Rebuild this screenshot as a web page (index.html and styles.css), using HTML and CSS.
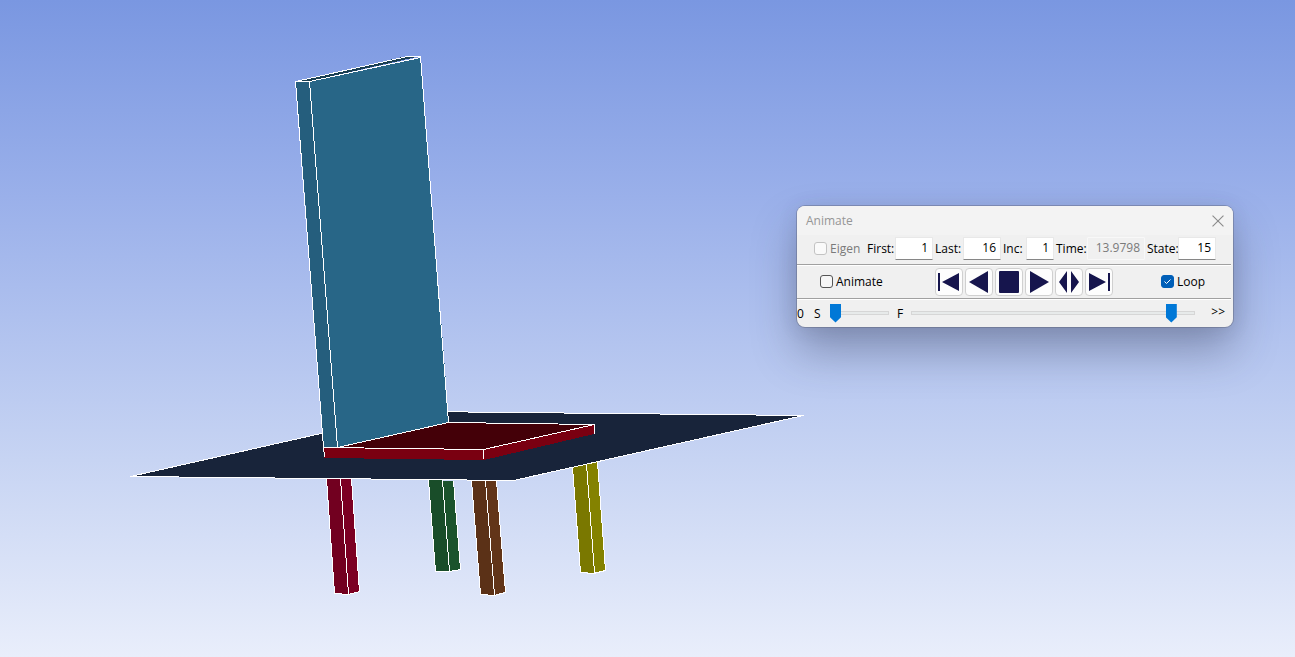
FILE: index.html
```html
<!DOCTYPE html>
<html lang="en">
<head>
<meta charset="utf-8">
<title>Animate</title>
<link rel="stylesheet" href="styles.css">
</head>
<body>
<main class="viewport">
  <svg class="model" viewBox="0 0 1295 657" preserveAspectRatio="xMinYMin slice" role="img" aria-label="Chair model">
    <path class="plane" d="M130.500 476.500L418.500 411.500L803.500 415.500L513.500 480.500Z"/>
    <path class="leg-red-a" d="M327 479H341L349 594L335 593Z"/>
    <path class="leg-red-b" d="M341 479H351L359 592L349 594Z"/>
    <path class="edge" d="M326.500 479L334.500 593.500L348.500 594.500L359.500 591.500L351.500 479M340.500 479L348.500 594"/>
    <path class="leg-green-a" d="M429 480H443L450 571H436Z"/>
    <path class="leg-green-b" d="M443 481H453L460 569L450 571Z"/>
    <path class="edge" d="M428.500 480L435.500 571.500L449.500 571.500L460.500 569.500L453.500 481M442.500 480L449.500 571"/>
    <path class="leg-brown-a" d="M472 481H486L494 595H481Z"/>
    <path class="leg-brown-b" d="M486 481H496L505 592L494 595Z"/>
    <path class="edge" d="M471.500 481L480.500 594.500L494.500 595.500L505.500 592.500L496.500 481M485.500 481L494.500 595"/>
    <path class="leg-olive-a" d="M573 467L586 464L594 573L581 572Z"/>
    <path class="leg-olive-b" d="M586 464L597 462L605 570L594 573Z"/>
    <path class="edge" d="M572.500 467L580.500 572.500L593.500 573.500L605.500 570.500L597.500 462M586.500 464L594.500 573"/>
    <path class="edge" d="M130.500 476.500L418.500 411.500L803.500 415.500L513.500 480.500Z"/>
    <path class="seat-top" d="M324 447L449 422L594 424L484 449Z"/>
    <path class="seat-side" d="M324 447L484 449L594 424V434L484 460L324 458Z"/>
    <path class="back-side" d="M296 81H310L338 447H324Z"/>
    <path class="back-top" d="M296 81L407 56H421L310 81Z"/>
    <path class="back-face" d="M310 81L421 57L449 422L338 447Z"/>
    <path class="edge" d="M324.500 457L323.500 447L295.500 81.500L407.500 56.500H420.500L448.500 422.500L337.500 447.500L309.500 81.500H296M309.500 81.500L420.500 57.500M324 447.500L483.500 449.500L594.500 424.500L448.500 422.500M483.500 449V459M594.500 424V434"/>
  </svg>

  <section class="dialog" aria-label="Animate">
    <header class="titlebar">
      <h1 class="title">Animate</h1>
      <button class="close" type="button" aria-label="Close">
        <svg class="close-icon" viewBox="0 0 11 11"><path d="M0.500 0.500L10.500 10.500M10.500 0.500L0.500 10.500"/></svg>
      </button>
    </header>

    <div class="row fields">
      <label class="check muted"><input class="tick" type="checkbox" disabled>Eigen</label>
      <label for="first">First:</label><input class="num" id="first" value="1">
      <label class="spaced" for="last">Last:</label><input class="num" id="last" value="16">
      <label class="spaced" for="inc">Inc:</label><input class="num" id="inc" value="1">
      <label class="spaced" for="time">Time:</label><input class="num" id="time" value="13.9798" disabled>
      <label class="spaced" for="state">State:</label><input class="num" id="state" value="15">
    </div>

    <div class="row playback">
      <label class="check"><input class="tick" type="checkbox">Animate</label>
      <div class="buttons">
        <button class="play" type="button" aria-label="First state"><svg class="icon" viewBox="0 0 26 26"><path d="M2 4h2v18H2zM6 13L23 4v18z"/></svg></button>
        <button class="play" type="button" aria-label="Play backward"><svg class="icon" viewBox="0 0 26 26"><path d="M3 13L22 2v22z"/></svg></button>
        <button class="play" type="button" aria-label="Stop"><svg class="icon" viewBox="0 0 26 26"><rect x="3" y="2" width="20" height="22" rx="1"/></svg></button>
        <button class="play" type="button" aria-label="Play forward"><svg class="icon" viewBox="0 0 26 26"><path d="M4 2L23 13L4 24z"/></svg></button>
        <button class="play" type="button" aria-label="Play back and forth"><svg class="icon" viewBox="0 0 26 26"><path d="M3 13L11 2v22zM15 2L23 13L15 24z"/></svg></button>
        <button class="play" type="button" aria-label="Last state"><svg class="icon" viewBox="0 0 26 26"><path d="M3 4L20 13L3 22zM22 4h2v18h-2z"/></svg></button>
      </div>
      <label class="check"><input class="tick" type="checkbox" checked>Loop</label>
    </div>

    <div class="row sliders">
      <span class="caption">0</span>
      <label class="caption" for="slow">S</label>
      <input class="slider" id="slow" type="range" min="0" max="10" value="0">
      <label class="caption indent" for="frame">F</label>
      <input class="slider" id="frame" type="range" min="1" max="16" value="15">
      <button class="more" type="button">&gt;&gt;</button>
    </div>
  </section>
</main>
</body>
</html>
```
FILE: styles.css
```css
* { box-sizing: border-box; }

body {
  margin: 0;
  font: 12px/16px "Open Sans", "Noto Sans", sans-serif;
  color: #000;
}

.viewport {
  position: relative;
  height: 100vh;
  overflow: hidden;
  background: linear-gradient(#7a97e1, #9ab0ea 30%, #c7d4f3 70%, #e9eefb);
}

.model {
  display: block;
  width: 100%;
  height: 100%;
  shape-rendering: crispEdges;
}

.edge { fill: none; stroke: #fff; stroke-width: 1; }
.plane { fill: #18243a; }
.seat-top { fill: #440008; }
.seat-side { fill: #7a0011; }
.back-face { fill: #286687; }
.back-side { fill: #255e7d; }
.back-top { fill: #183d50; }
.leg-red-a { fill: #720020; }
.leg-red-b { fill: #7c0023; }
.leg-green-a { fill: #194d29; }
.leg-green-b { fill: #1b532c; }
.leg-brown-a { fill: #5b3117; }
.leg-brown-b { fill: #623519; }
.leg-olive-a { fill: #7a7800; }
.leg-olive-b { fill: #848200; }

.dialog {
  position: absolute;
  left: 797px;
  top: 206px;
  width: 436px;
  overflow: hidden;
  border-radius: 8px;
  background: #f0f0f0;
  box-shadow: 0 0 0 1px rgba(90, 95, 115, 0.4), 0 24px 44px rgba(50, 55, 80, 0.36), 0 2px 20px rgba(50, 55, 80, 0.12);
}

.titlebar {
  display: flex;
  align-items: center;
  justify-content: space-between;
  height: 29px;
  padding: 0 9px;
  background: #f3f3f3;
}

.title { margin: 0; font-size: 12px; font-weight: 400; color: #969696; }

button { padding: 0; border: 0; background: none; font: inherit; color: inherit; }

.close { display: flex; }
.close-icon { width: 12px; height: 12px; fill: none; stroke: #8a8a8a; }

.row { display: grid; align-items: center; }

.fields {
  grid-template-columns: 53px 28px 38px 30px 38px 25px 28px 33px 58px 33px 38px;
  height: 29px;
  padding: 0 17px 2px;
}

.spaced { padding-left: 2px; }

.check { display: flex; align-items: center; gap: 3px; }
.muted { color: #7a7a7a; }

.tick {
  appearance: none;
  width: 13px;
  height: 13px;
  margin: 0;
  border: 1px solid #555;
  border-radius: 3px;
  background: #f6f6f6;
}
.tick:disabled { border-color: #c3c3c3; background: #fafafa; }
.tick:checked {
  border-color: #005fb8;
  background: #005fb8 url("data:image/svg+xml,%3Csvg xmlns='http://www.w3.org/2000/svg' viewBox='0 0 11 11'%3E%3Cpath d='M2.500 5.500L4.500 7.500L8.500 3.500' fill='none' stroke='%23fff'/%3E%3C/svg%3E") center / 11px 11px;
}

.num {
  width: 100%;
  height: 23px;
  padding: 0 4px 2px;
  border: 1px solid #e8e8e8;
  border-bottom-color: #868686;
  border-radius: 1px;
  background: #fff;
  font: inherit;
  color: #000;
  text-align: right;
}
.num:disabled { border-color: #f8f8f8; background: #f0f0f0; color: #7a7a7a; }

.playback {
  grid-template-columns: 115px 1fr 56px;
  height: 34px;
  margin-right: 2px;
  padding: 0 14px 0 23px;
  border-top: 1px solid #a0a0a0;
  box-shadow: inset 0 1px #fff;
}

.buttons { display: flex; gap: 2px; }
.play {
  width: 28px;
  height: 28px;
  border: 1px solid #d0d0d0;
  border-radius: 4px;
  background: #fdfdfd;
}
.icon { display: block; width: 26px; height: 26px; fill: #16154d; }

.sliders {
  grid-template-columns: 17px 16px 59px 22px 284px 1fr;
  height: 29px;
  margin-right: 2px;
  padding-right: 6px;
  border-top: 1px solid #a0a0a0;
  box-shadow: inset 0 1px #fff;
}
.caption { padding-top: 2px; }
.indent { padding-left: 8px; }

.slider {
  appearance: none;
  width: 100%;
  height: 19px;
  margin: 0;
  background: linear-gradient(#e7eaea, #e7eaea) center / calc(100% - 2px) 2px no-repeat,
              linear-gradient(#d6d6d6, #d6d6d6) center / 100% 4px no-repeat;
}
.slider::-webkit-slider-thumb {
  appearance: none;
  width: 11px;
  height: 19px;
  background: #0078d7;
  clip-path: polygon(0 0, 100% 0, 100% 73%, 50% 100%, 0 73%);
}

.more { text-align: right; line-height: 16px; padding-bottom: 2px; }
```
